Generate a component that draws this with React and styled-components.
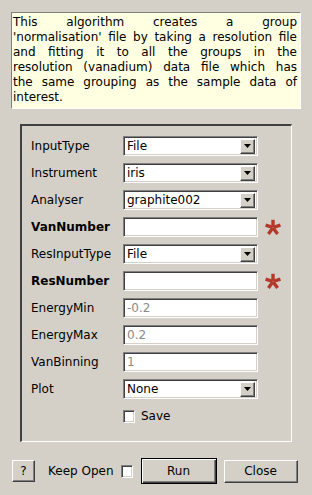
import React from "react";
import styled, { createGlobalStyle } from "styled-components";

const GlobalStyle = createGlobalStyle`
  html, body { margin: 0; padding: 0; background: #d4d0c8; }
  body {
    font-family: "DejaVu Sans", "Liberation Sans", sans-serif;
    font-size: 12px;
    color: #000;
  }
  * { box-sizing: border-box; }
`;

const Page = styled.div`
  width: 312px;
  height: 495px;
  padding: 12px 11px 0 11px;
  display: flex;
  flex-direction: column;
`;

const Description = styled.div`
  background: #ffffe1;
  border: 1px solid;
  border-color: #808080 #ffffff #ffffff #808080;
  padding: 2px 3px 3px 1px;
  line-height: 15px;
`;

const Line = styled.div`
  text-align: ${(p) => (p.$justify ? "justify" : "left")};
  text-align-last: ${(p) => (p.$justify ? "justify" : "left")};
`;

const Frame = styled.div`
  margin: 15px 0 0 9px;
  width: 272px;
  border-style: solid;
  border-width: 2px 1px 1px 2px;
  border-color: #404040 #ffffff #ffffff #404040;
  padding: 10px 0 15px 9px;
  display: grid;
  grid-template-columns: 85px 135px 16px;
  column-gap: 7px;
  row-gap: 7px;
  grid-auto-rows: 20px;
  align-items: center;
`;

const Label = styled.div`
  font-weight: ${(p) => (p.$bold ? "bold" : "normal")};
  white-space: nowrap;
  grid-column: 1;
`;

const sunken = `
  border: 1px solid;
  border-color: #808080 #ffffff #ffffff #808080;
  box-shadow: inset 1px 1px 0 #404040, inset -1px -1px 0 #d4d0c8;
`;

const Combo = styled.div`
  grid-column: 2;
  height: 20px;
  background: #fff;
  ${sunken}
  display: flex;
  align-items: center;
  padding: 2px 2px 2px 3px;
`;

const ComboValue = styled.span`
  flex: 1;
  line-height: 16px;
`;

const ArrowButton = styled.span`
  width: 15px;
  height: 15px;
  background: #d4d0c8;
  border: 1px solid;
  border-color: #ffffff #404040 #404040 #ffffff;
  box-shadow: inset -1px -1px 0 #808080;
  display: flex;
  align-items: center;
  justify-content: center;
`;

const TextField = styled.input`
  grid-column: 2;
  width: 135px;
  height: 20px;
  margin: 0;
  background: #fff;
  ${sunken}
  outline: none;
  padding: 0 3px;
  font-family: inherit;
  font-size: 12px;
  color: ${(p) => (p.$muted ? "#8a8a8a" : "#000")};
`;

const Star = styled.svg`
  grid-column: 3;
  width: 16px;
  height: 16px;
  display: block;
`;

const CheckRow = styled.div`
  grid-column: 2;
  display: flex;
  align-items: center;
  gap: 6px;
`;

const CheckBox = styled.span`
  display: inline-block;
  width: 12px;
  height: 13px;
  background: #fff;
  ${sunken}
`;

const Footer = styled.div`
  margin: 16px 0 0 1px;
  display: flex;
  align-items: center;
  height: 26px;
`;

const Button = styled.div`
  width: ${(p) => p.$w}px;
  height: ${(p) => p.$h}px;
  margin-left: ${(p) => p.$ml || 0}px;
  background: #d4d0c8;
  border: 1px solid;
  border-color: ${(p) =>
    p.$default ? "#000" : "#ffffff #404040 #404040 #ffffff"};
  box-shadow: ${(p) =>
    p.$default
      ? "inset 1px 1px 0 #ffffff, inset -1px -1px 0 #404040, inset -2px -2px 0 #808080"
      : "inset -1px -1px 0 #808080"};
  display: flex;
  align-items: center;
  justify-content: center;
`;

const KeepLabel = styled.span`
  margin-left: 13px;
  margin-right: 7px;
`;

function Arrow() {
  return (
    <svg width="7" height="4" viewBox="0 0 7 4">
      <polygon points="0,0 7,0 3.5,4" fill="#000" />
    </svg>
  );
}

function ComboBox({ value }) {
  return (
    <Combo>
      <ComboValue>{value}</ComboValue>
      <ArrowButton>
        <Arrow />
      </ArrowButton>
    </Combo>
  );
}

function Asterisk() {
  const arms = [0, 72, 144, 216, 288];
  return (
    <Star viewBox="0 0 16 16">
      {arms.map((a) => (
        <rect
          key={a}
          x="6.3"
          y="0.8"
          width="3.4"
          height="7.4"
          fill="#b5382a"
          transform={`rotate(${a} 8 8.6)`}
        />
      ))}
    </Star>
  );
}

const lines = [
  "This algorithm creates a group",
  "'normalisation' file by taking a resolution file",
  "and fitting it to all the groups in the",
  "resolution (vanadium) data file which has",
  "the same grouping as the sample data of",
  "interest.",
];

export default function App() {
  return (
    <>
      <GlobalStyle />
      <Page>
        <Description>
          {lines.map((l, i) => (
            <Line key={i} $justify={i < lines.length - 1}>
              {l}
            </Line>
          ))}
        </Description>
        <Frame>
          <Label>InputType</Label>
          <ComboBox value="File" />
          <span />

          <Label>Instrument</Label>
          <ComboBox value="iris" />
          <span />

          <Label>Analyser</Label>
          <ComboBox value="graphite002" />
          <span />

          <Label $bold>VanNumber</Label>
          <TextField defaultValue="" />
          <Asterisk />

          <Label>ResInputType</Label>
          <ComboBox value="File" />
          <span />

          <Label $bold>ResNumber</Label>
          <TextField defaultValue="" />
          <Asterisk />

          <Label>EnergyMin</Label>
          <TextField $muted defaultValue="-0.2" />
          <span />

          <Label>EnergyMax</Label>
          <TextField $muted defaultValue="0.2" />
          <span />

          <Label>VanBinning</Label>
          <TextField $muted defaultValue="1" />
          <span />

          <Label>Plot</Label>
          <ComboBox value="None" />
          <span />

          <CheckRow>
            <CheckBox />
            <span>Save</span>
          </CheckRow>
        </Frame>
        <Footer>
          <Button $w={23} $h={22}>?</Button>
          <KeepLabel>Keep Open</KeepLabel>
          <CheckBox />
          <Button $w={76} $h={26} $ml={8} $default>
            Run
          </Button>
          <Button $w={74} $h={23} $ml={7}>
            Close
          </Button>
        </Footer>
      </Page>
    </>
  );
}
